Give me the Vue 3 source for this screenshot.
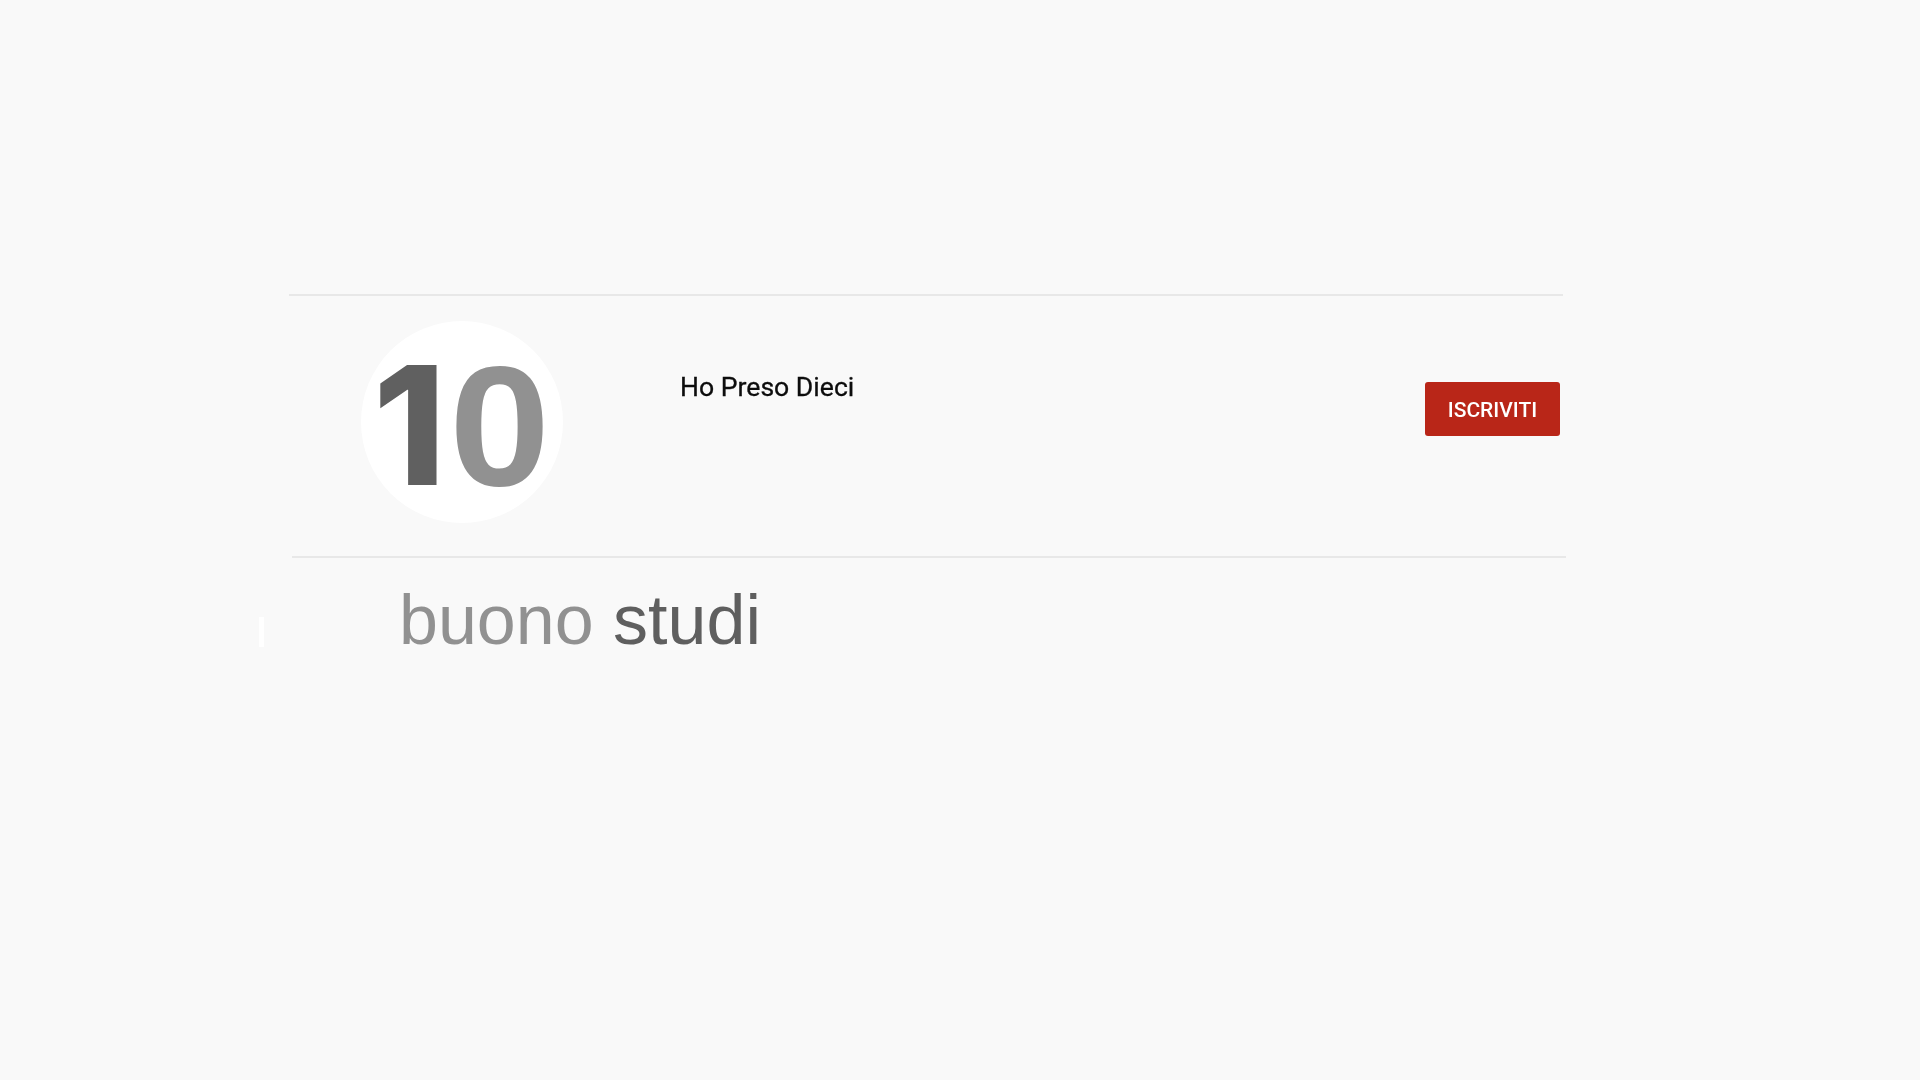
<script setup>
const channel = 'Ho Preso Dieci'
</script>

<template>
  <main class="page">
    <section class="channel">
      <div class="logo">
        <span class="one">1</span><span class="zero">0</span>
      </div>
      <h1 class="name">{{ channel }}</h1>
      <button class="subscribe" type="button"><span class="label">ISCRIVITI</span></button>
    </section>
    <div class="second-rule"></div>
    <div class="caption">
      <i class="mark"></i>
      <p class="title"><span class="light">buono</span> <span class="dark">studi</span></p>
    </div>
  </main>
</template>

<style>
html, body { margin: 0; background: #f9f9f9; }
</style>

<style scoped>
.page {
  width: 1920px;
  height: 1080px;
  overflow: hidden;
  box-sizing: border-box;
  padding-top: 294px;
  background: #f9f9f9;
}
.channel {
  box-sizing: border-box;
  width: 1274px;
  height: 262px;
  margin-left: 289px;
  border-top: 2px solid #e8e8e8;
  display: flex;
  align-items: flex-start;
}
.logo {
  box-sizing: border-box;
  width: 202px;
  height: 202px;
  margin: 25px 0 0 72px;
  padding: 7px 4px 0 0;
  border-radius: 50%;
  background: #fff;
  display: flex;
  align-items: center;
  justify-content: center;
  filter: blur(0.5px);
}
.one {
  color: #606060;
  font: 800 165px/1 Inter, "Liberation Sans", sans-serif;
  margin-right: 6px;
}
.zero {
  display: inline-block;
  color: #919191;
  font: 700 171px/1 "Liberation Sans", Arial, sans-serif;
  transform: scaleX(1.06);
}
.name {
  margin: 75px 0 0 117px;
  font: 400 26.6px/32px Roboto, "Liberation Sans", sans-serif;
  -webkit-text-stroke: 0.3px #0d0d0d;
  color: #0d0d0d;
  flex: 1;
  filter: blur(0.3px);
}
.subscribe {
  width: 135px;
  height: 54px;
  margin: 86px 3px 0 0;
  padding: 0;
  border: 0;
  border-radius: 3px;
  background: #b92618;
  color: #fff;
  font: 500 21px/54px Roboto, "Liberation Sans", sans-serif;
  filter: blur(0.3px);
}
.label {
  display: block;
  padding-top: 1px;
}
.second-rule {
  width: 1274px;
  height: 2px;
  margin-left: 292px;
  background: #e8e8e8;
}
.caption {
  display: flex;
  align-items: flex-start;
  margin-left: 259px;
}
.mark {
  width: 5px;
  height: 30px;
  margin-top: 59px;
  background: #fff;
}
.title {
  margin: 22px 0 0 135px;
  font: 400 70px/80px "Liberation Sans", Arial, sans-serif;
  white-space: nowrap;
}
.light { color: #919191; }
.dark { color: #5f5f5f; }
</style>
